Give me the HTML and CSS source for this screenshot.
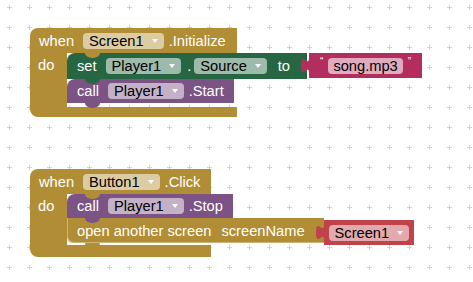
FILE: index.html
```html
<!DOCTYPE html>
<html lang="en">
  <head>
    <meta charset="UTF-8" />
    <meta name="viewport" content="width=device-width, initial-scale=1.0" />
    <link rel="stylesheet" href="styles.css">
    <title>Blocks workspace</title>
  </head>
  <body>
    <div class="workspace">
      <svg class="grid" width="473" height="282">
        <defs>
          <pattern id="dots" width="20" height="20" patternUnits="userSpaceOnUse">
            <rect x="7" y="7" width="5" height="1" fill="#d2d2d2" />
            <rect x="9" y="5" width="1" height="5" fill="#d2d2d2" />
          </pattern>
        </defs>
        <rect width="100%" height="100%" fill="url(#dots)" />
      </svg>

      <!-- when Screen1.Initialize -->
      <div class="event ev-init">
        <div class="head">
          <span>when</span>
          <span class="field dd">Screen1<i class="arrow"></i></span>
          <span>.Initialize</span>
        </div>
        <div class="body">
          <div class="do">do</div>
          <div class="stack">
            <div class="stmt">
              <div class="shape green">
                <span>set</span>
                <span class="field dd f-first">Player1<i class="arrow"></i></span>
                <span class="dot">.</span>
                <span class="field dd">Source<i class="arrow"></i></span>
                <span class="to">to</span>
              </div>
              <div class="value pink">
                <svg class="tab" width="9" height="15" viewBox="0 0 9 15"><path d="M9,0 L8,0 c0,10 -8,-8 -8,7.5 s8,-2.5 8,7.5 L9,15 Z" /></svg>
                <span class="quote">&#8220;</span>
                <span class="field txt">song.mp3</span>
                <span class="quote">&#8221;</span>
              </div>
            </div>
            <div class="stmt">
              <div class="shape purple">
                <span>call</span>
                <span class="field dd f-first">Player1<i class="arrow"></i></span>
                <span class="method">.Start</span>
              </div>
            </div>
          </div>
        </div>
        <div class="arm"></div>
      </div>

      <!-- when Button1.Click -->
      <div class="event ev-click">
        <div class="head">
          <span>when</span>
          <span class="field dd">Button1<i class="arrow"></i></span>
          <span>.Click</span>
        </div>
        <div class="body">
          <div class="do">do</div>
          <div class="stack">
            <div class="stmt">
              <div class="shape purple">
                <span>call</span>
                <span class="field dd f-first">Player1<i class="arrow"></i></span>
                <span class="method">.Stop</span>
              </div>
            </div>
            <div class="stmt">
              <div class="shape gold open">
                <span>open another screen</span>
                <span class="arg">screenName</span>
              </div>
              <div class="value red">
                <svg class="tab" width="9" height="15" viewBox="0 0 9 15"><path d="M9,0 L8,0 c0,10 -8,-8 -8,7.5 s8,-2.5 8,7.5 L9,15 Z" /></svg>
                <span class="field dd">Screen1<i class="arrow"></i></span>
              </div>
            </div>
          </div>
        </div>
        <div class="arm"></div>
      </div>
    </div>
  </body>
</html>
```

FILE: styles.css
```css
* {
  margin: 0;
  padding: 0;
  box-sizing: border-box;
}

body {
  background: #fff;
  font-family: "Liberation Sans", Arial, sans-serif;
  font-size: 11pt;
}

.workspace {
  position: relative;
  width: 473px;
  height: 282px;
  overflow: hidden;
}

.grid {
  position: absolute;
  left: 0;
  top: 0;
}

/* event blocks, placed on the canvas */
.event {
  position: absolute;
  display: flex;
  flex-direction: column;
  color: #fff;
}
.ev-init {
  left: 30px;
  top: 28px;
}
.ev-click {
  left: 30px;
  top: 169px;
}

.head {
  position: relative;
  display: flex;
  align-items: center;
  height: 25px;
  padding: 0 11px 0 9px;
  background: #b18e35;
  border-radius: 8px 0 0 0;
  white-space: nowrap;
}
.head .dd {
  margin: 0 5px 0 9px;
}
.head::after {
  content: "";
  position: absolute;
  left: 55px;
  bottom: -5px;
  width: 15px;
  height: 5px;
  background: #b18e35;
  border-radius: 0 0 7px 7px / 0 0 5px 5px;
  z-index: 2;
}

.body {
  display: flex;
}
.do {
  width: 37px;
  padding: 4px 0 0 8px;
  background: #b18e35;
}
.stack {
  width: 0;
  display: flex;
  flex-direction: column;
  padding-bottom: 4px;
}
.ev-click .stack {
  padding-bottom: 0;
}

.arm {
  height: 10px;
  background: #b18e35;
  border-radius: 0 0 0 8px;
}
.ev-click .arm {
  height: 12px;
}

/* statement blocks */
.stmt {
  position: relative;
  display: flex;
  align-items: flex-start;
}
.shape {
  position: relative;
  display: flex;
  align-items: center;
  flex-shrink: 0;
  padding: 0 10px;
  white-space: nowrap;
  border-radius: 8px 0 0 0;
}
.shape::after {
  content: "";
  position: absolute;
  left: 18px;
  bottom: -5px;
  width: 15px;
  height: 5px;
  background: inherit;
  border-radius: 0 0 7px 7px / 0 0 5px 5px;
  z-index: 2;
}

.green {
  height: 26px;
  padding-right: 17px;
  background: #266643;
}
.purple {
  height: 24px;
  background: #7c5385;
}
.gold {
  height: 25px;
  padding-right: 19px;
  background: #b18e35;
}
.open {
  border-radius: 0 0 0 6px;
  box-shadow: inset 1px -1px 0 rgba(255, 255, 255, 0.35);
}

.f-first {
  margin-left: 9px;
}
.dot {
  margin: 0 3px 0 6px;
}
.to {
  margin-left: 11px;
}
.method {
  margin-left: 5px;
}
.arg {
  margin-left: 10px;
}

/* fields */
.field {
  display: inline-flex;
  align-items: center;
  height: 16px;
  padding: 0 6px;
  border-radius: 4px;
  background: rgba(255, 255, 255, 0.55);
  color: #000;
}
.arrow {
  width: 0;
  height: 0;
  margin-left: 8px;
  border-left: 3px solid transparent;
  border-right: 3px solid transparent;
  border-top: 4px solid #fff;
}
.txt {
  padding: 0 5px;
  background: rgba(255, 255, 255, 0.6);
}

/* value blocks */
.value {
  position: relative;
  display: flex;
  align-items: center;
  flex-shrink: 0;
  height: 25px;
  white-space: nowrap;
}
.value .tab {
  position: absolute;
  left: -8px;
  top: 5px;
}
.pink {
  margin-left: 2px;
  padding: 0 11px;
  background: #b32d5e;
  color: #b32d5e;
}
.red {
  margin-top: 2px;
  padding: 0 5px;
  background: #c0434b;
  color: #c0434b;
}
.tab path {
  fill: currentColor;
}
.quote {
  align-self: flex-start;
  margin-top: 3px;
  color: #fff;
  font-size: 10px;
}
.pink .field {
  margin: 0 5px;
}
```
